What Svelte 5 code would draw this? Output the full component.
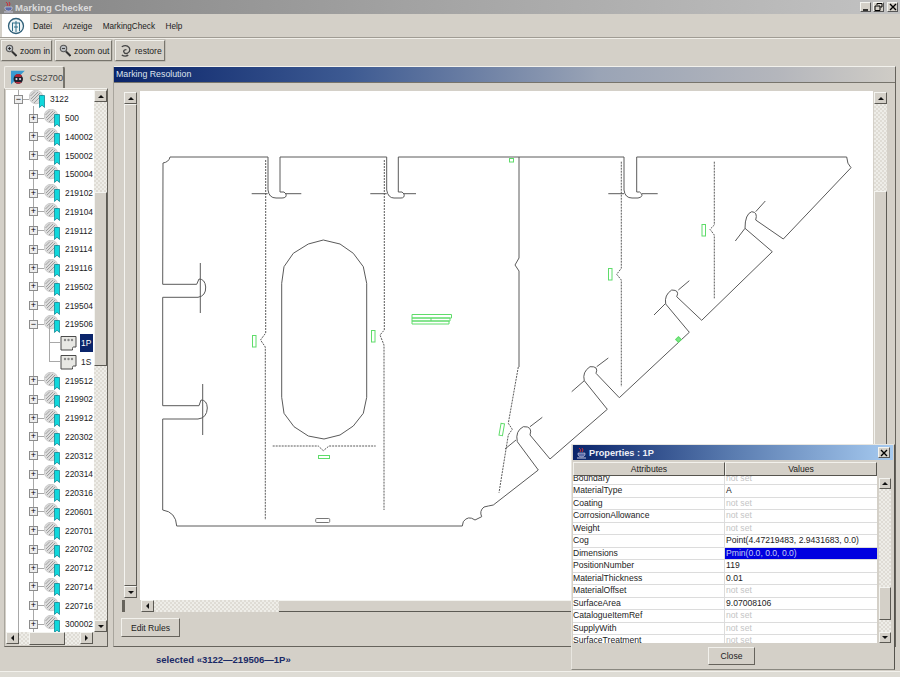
<script>
  const tree = [
    { label: '3122', level: 1, open: true },
    { label: '500', level: 2 },
    { label: '140002', level: 2 },
    { label: '150002', level: 2 },
    { label: '150004', level: 2 },
    { label: '219102', level: 2 },
    { label: '219104', level: 2 },
    { label: '219112', level: 2 },
    { label: '219114', level: 2 },
    { label: '219116', level: 2 },
    { label: '219502', level: 2 },
    { label: '219504', level: 2 },
    { label: '219506', level: 2, open: true },
    { label: '1P', level: 3, selected: true },
    { label: '1S', level: 3 },
    { label: '219512', level: 2 },
    { label: '219902', level: 2 },
    { label: '219912', level: 2 },
    { label: '220302', level: 2 },
    { label: '220312', level: 2 },
    { label: '220314', level: 2 },
    { label: '220316', level: 2 },
    { label: '220601', level: 2 },
    { label: '220701', level: 2 },
    { label: '220702', level: 2 },
    { label: '220712', level: 2 },
    { label: '220714', level: 2 },
    { label: '220716', level: 2 },
    { label: '300002', level: 2 }
  ];

  const props = [
    ['Boundary', null],
    ['MaterialType', 'A'],
    ['Coating', null],
    ['CorrosionAllowance', null],
    ['Weight', null],
    ['Cog', 'Point(4.47219483, 2.9431683, 0.0)'],
    ['Dimensions', 'Pmin(0.0, 0.0, 0.0)', true],
    ['PositionNumber', '119'],
    ['MaterialThickness', '0.01'],
    ['MaterialOffset', null],
    ['SurfaceArea', '9.07008106'],
    ['CatalogueItemRef', null],
    ['SupplyWith', null],
    ['SurfaceTreatment', null]
  ];

  // plate outline, page coordinates (viewBox of the canvas matches the page)
  const outline = `M163 163 Q169 162 170 157 H268 V190 Q269 198 276 198 H282 Q287 198 286 194 Q285 191 280 192 V157
    H386.7 V190 Q388 198 394 198 H401 Q405 198 404 194 Q403 191 398.3 192 V157 H624 V190 Q625 198 632 198 H638
    Q643 197 641.7 194 Q640 191 636.7 192 V157 H846.7 Q847 164 851 167.7 L783.3 239 L755.7 220 Q758 212 751.7 211.7
    Q745 214 745 228.3 L772.3 251.7 L701.7 320.3 L676.7 296.7 Q680 290 671.7 290 Q664 295 665.7 304 L689.3 332.3
    L619.3 397.7 L596 373.3 Q599 366 590 366.7 Q582 372 584.3 380.7 L607.3 409.3 L550 459 L530 435 Q533 426 523.3 426.7
    Q515 431 517.3 441.7 L538.3 470 L493.3 505 Q488 506 484 507 Q479 511 481.7 516.7 L475 520 Q468 515 463.3 521.7
    L462.3 526 H176.7 Q176 512 162.7 510 V419 H198 Q207 418 207.3 408 Q207 400 201 400 L199 405.7 H162.7 V297.3 H198
    Q206 296 205.7 287 Q205 279 199 279 L196.7 284.3 H162.7 Z`;

  const hole = `M281.7 283.3 L284 266.7 293.3 253.3 308.3 244 323.3 240 340 244 353.3 253.3 363.3 266.7 366.7 283.3 V397.3
    L363.3 413.3 353.3 426 340 435 324 439 308.3 436 294 426.7 284 413.3 281.7 397.3 Z`;

  const ticks = `M200.3 263 V313 M202.7 384 V435 M251.7 193.7 H267.7 M285.7 193.7 H301.3 M370.3 193.7 H386.7 M404 193.7 H416
    M608.3 193.7 H624 M641.7 193.7 H657.7 M755.7 211.7 L765.3 201 M745 228.3 L735.3 241 M678.3 290 L689.3 280.7
    M665 304 L654 315 M596.7 366.7 L608.3 358 M584.3 380.7 L571.7 391.7 M530 426.7 L542.3 417.3 M516 440 L505 449
    M519 157 V258 L515 265 519 271 V367`;

  const dashed = `M265.7 160 V333 L260.5 340 265.3 347 V520 M384.3 160 V330 L380 335 384 345 V510
    M621.3 161.7 V268.3 L616.7 274.3 621.3 280 V386.7 M714.3 161.7 V225 L710 229.3 714.3 235 V298.3
    M518.3 367 L508.3 423.3 512.3 429.3 508.3 435 499 492.7 M272.7 446 H318.3 L323.3 450.7 329 446 H375.7`;
</script>

{#snippet groupIcon()}
  <svg class="ticon" width="17" height="18" viewBox="0 0 17 18">
    <circle cx="7" cy="7" r="6.8" fill="#dcdcdc" stroke="#b4b4b4" stroke-width="0.6" />
    <path d="M2 9 L9 2 M3 11 L11 3 M5 13 L13 5 M1.5 6 L6 1.5" stroke="#8e8e8e" stroke-width="0.8" />
    <path d="M10.5 5.5 H15.5 V17.5 L13 15.2 10.5 17.5 Z" fill="#10d8dc" stroke="#067a88" stroke-width="0.7" />
  </svg>
{/snippet}

{#snippet partIcon()}
  <svg class="ticon" width="17" height="16" viewBox="0 0 17 16">
    <path d="M1 1.5 H16 V12 H13.5 Q12.5 12 12.5 13.5 V15 H1 Z" fill="#e8e8e4" stroke="#4a4a4a" />
    <circle cx="5" cy="5" r="1.2" fill="#888" />
    <circle cx="8.5" cy="5" r="1.2" fill="#888" />
    <circle cx="12" cy="5" r="1.2" fill="#888" />
  </svg>
{/snippet}

{#snippet cupIcon()}
  <svg width="11" height="12" viewBox="0 0 11 12">
    <path d="M3 1 Q6 3 4 5 M6 1 Q8 3 6 5" stroke="#c8303a" fill="none" />
    <path d="M2 6 H9 V8 Q8 10 5.5 10 Q3 10 2 8 Z" fill="#5a6aa8" stroke="#e8e8f0" stroke-width="0.5" />
    <path d="M1 11 H10" stroke="#c8c8e0" />
  </svg>
{/snippet}

{#snippet magnifier(sign)}
  <svg width="12" height="13" viewBox="0 0 12 13">
    <circle cx="4.5" cy="4.5" r="3.2" fill="#b8bcc0" stroke="#555" stroke-width="1.1" />
    <path d="M7 7.5 L11.5 12" stroke="#333" stroke-width="2" />
    <path d={sign === '+' ? 'M3 4.5 H6 M4.5 3 V6' : 'M3 4.5 H6'} stroke="#222" stroke-width="0.8" />
  </svg>
{/snippet}

<div class="window">
  <div class="titlebar">
    {@render cupIcon()}
    <span class="title">Marking Checker</span>
    <div class="winbtns">
      <span class="winbtn"><svg width="8" height="8" viewBox="0 0 8 8"><path d="M1 7 H6" stroke="#000" stroke-width="1.5" /></svg></span>
      <span class="winbtn"><svg width="9" height="8" viewBox="0 0 9 8"><path d="M3 2 V0.5 H8 V4 H6.5 M1 3 H6 V7.5 H1 Z" fill="none" stroke="#000" /></svg></span>
      <span class="winbtn close"><svg width="8" height="8" viewBox="0 0 8 8"><path d="M1 1 L7 7 M7 1 L1 7" stroke="#000" stroke-width="1.4" /></svg></span>
    </div>
  </div>

  <div class="menubar">
    <div class="logo">
      <svg width="18" height="18" viewBox="0 0 18 18">
        <circle cx="9" cy="9" r="7.5" fill="#eef4f6" stroke="#2f5f78" stroke-width="1.3" />
        <path d="M5 6 H13 M5.5 6 V14 M9 4 V15 M12.5 6 V14 M7 10 H11" stroke="#2f6f88" fill="none" />
      </svg>
    </div>
    <span class="menu">Datei</span>
    <span class="menu">Anzeige</span>
    <span class="menu">MarkingCheck</span>
    <span class="menu">Help</span>
  </div>

  <div class="toolbar">
    <button class="tool" style="width:51px">{@render magnifier('+')}<span>zoom in</span></button>
    <button class="tool" style="width:57px">{@render magnifier('-')}<span>zoom out</span></button>
    <button class="tool" style="width:50px">
      <svg width="13" height="13" viewBox="0 0 14 14"><path d="M3 3 Q8 0 11 4 Q13 8 9 10 Q6 11 5 8 Q5 6 8 6 M3 12 Q7 14 10 12" fill="none" stroke="#444" stroke-width="1.4" /></svg>
      <span>restore</span>
    </button>
  </div>

  <div class="main">
    <div class="side">
      <div class="tab">
        <svg width="19" height="20" viewBox="0 0 19 20">
          <path d="M0 0 H19 L0 19 Z" fill="#3a9ad0" />
          <circle cx="10" cy="11.5" r="6.5" fill="#20202c" />
          <path d="M5 6.5 Q10 2.5 15 6.5 L14 8.5 H6 Z" fill="#b02030" />
          <circle cx="7.5" cy="11.5" r="1.5" fill="#d8d8e8" /><circle cx="12.5" cy="11.5" r="1.5" fill="#d8d8e8" />
          <path d="M5 15.5 Q10 20 15 15.5" fill="#c03040" />
        </svg>
        <span>CS2700</span>
      </div>
      <div class="treepane">
        <div class="treerow">
          <div class="tree">
            {#each tree as node}
              <div class="node" style="padding-left:{node.level === 3 ? 43 : node.level * 15 - 7}px">
                {#if node.level === 3}
                  <span class="elbow"></span>
                  {@render partIcon()}
                {:else}
                  <span class="toggle">{node.open ? '−' : '+'}</span>
                  <span class="stub"></span>
                  {@render groupIcon()}
                {/if}
                <span class="label" class:selected={node.selected}>{node.label}</span>
              </div>
            {/each}
          </div>
          <div class="vscroll tree-scroll">
            <span class="arrow up"></span>
            <span class="track" style="height:90px"></span>
            <span class="thumb" style="height:174px"></span>
            <span class="track grow"></span>
            <span class="arrow down"></span>
          </div>
        </div>
        <div class="hscroll">
          <span class="arrow left"></span>
          <span class="track" style="width:10px"></span>
          <span class="thumb" style="width:36px"></span>
          <span class="track grow"></span>
          <span class="arrow right"></span>
          <span class="corner"></span>
        </div>
      </div>
    </div>

    <div class="panel">
      <div class="panel-title">Marking Resolution</div>
      <div class="panel-body">
        <div class="canvas-row">
          <div class="vscroll left-scroll">
            <span class="arrow up"></span>
            <span class="thumb grow"></span>
            <span class="arrow down"></span>
          </div>
          <div class="canvas">
            <svg width="733" height="509" viewBox="140 91 733 509">
              <g fill="none" stroke="#5a5a5a" stroke-width="1">
                <path d={outline} />
                <path d={hole} />
                <path d={ticks} />
                <path d={dashed} stroke-dasharray="2 1" />
                <rect x="315.7" y="518.5" width="14" height="4" rx="1" stroke="#777" />
              </g>
              <g fill="none" stroke="#5fdc6a" stroke-width="1">
                <rect x="252.5" y="335.5" width="3.5" height="11.5" />
                <rect x="371.5" y="330.5" width="3.5" height="11.5" />
                <rect x="509.5" y="158.5" width="4" height="3.5" />
                <rect x="608.5" y="268.5" width="3.5" height="11.5" />
                <rect x="702" y="224.5" width="3.5" height="11.5" />
                <rect x="318.5" y="455.5" width="11" height="3" />
                <rect x="500" y="423.5" width="3.5" height="12" transform="rotate(10 501.7 429.5)" />
                <rect x="676.5" y="337.5" width="4" height="4" transform="rotate(45 678.5 339.5)" fill="#7ce884" />
                <path d="M412 314.5 H451.5 V318 H412 Z M412 318 H450 V321 H412 Z M412 321 H449 V324 H412 Z M431 318 V321" />
              </g>
            </svg>
          </div>
          <div class="vscroll right-scroll">
            <span class="arrow up"></span>
            <span class="track" style="height:87px"></span>
            <span class="thumb grow"></span>
            <span class="arrow down"></span>
          </div>
        </div>
        <div class="hscroll canvas-h">
          <span class="splitgrip"></span>
          <span class="arrow left"></span>
          <span class="track" style="width:125px"></span>
          <span class="thumb grow"></span>
        </div>
        <button class="btn edit">Edit Rules</button>
      </div>
    </div>
  </div>

  <div class="status"><span>selected «3122—219506—1P»</span></div>
  <div class="bottomedge"></div>

  <div class="dialog">
    <div class="dlg-title">
      {@render cupIcon()}
      <span>Properties : 1P</span>
      <span class="winbtn dlg-close"><svg width="8" height="8" viewBox="0 0 8 8"><path d="M1 1 L7 7 M7 1 L1 7" stroke="#000" stroke-width="1.4" /></svg></span>
    </div>
    <div class="dlg-body">
      <div class="table">
        <div class="thead"><span>Attributes</span><span>Values</span></div>
        <div class="tbody">
          {#each props as [name, value, active]}
            <div class="prow">
              <span class="pname">{name}</span>
              <span class="pval" class:notset={value === null} class:active={active}>{value ?? 'not set'}</span>
            </div>
          {/each}
        </div>
      </div>
      <div class="vscroll dlg-scroll">
        <span class="arrow up"></span>
        <span class="track" style="height:98px"></span>
        <span class="thumb" style="height:33px"></span>
        <span class="track grow"></span>
        <span class="arrow down"></span>
      </div>
    </div>
    <div class="dlg-foot"><button class="btn close-btn">Close</button></div>
  </div>
</div>

<style>
  :global(body) {
    margin: 0;
    background: #d4d0c8;
  }
  .window {
    position: relative;
    width: 900px;
    height: 677px;
    overflow: hidden;
    display: flex;
    flex-direction: column;
    background: #d4d0c8;
    font-family: "Liberation Sans", Arial, sans-serif;
    font-size: 8.6px;
    color: #1c1c1c;
  }

  /* title bar */
  .titlebar {
    height: 14px;
    flex: none;
    display: flex;
    align-items: center;
    padding-left: 3px;
    gap: 1px;
    background: linear-gradient(90deg, #858585, #a2a2a2 45%, #c2c2c2);
  }
  .title {
    font-weight: bold;
    font-size: 9.6px;
    color: #dcdcdc;
  }
  .winbtns {
    margin-left: auto;
    display: flex;
    gap: 2px;
    padding-right: 2px;
  }
  .winbtn {
    width: 11px;
    height: 10px;
    box-sizing: border-box;
    display: flex;
    align-items: center;
    justify-content: center;
    background: #d4d0c8;
    border: 1px solid;
    border-color: #f4f4f0 #555 #555 #f4f4f0;
  }
  .winbtn.close {
    margin-left: 1px;
  }

  /* menu */
  .menubar {
    height: 23px;
    flex: none;
    display: flex;
    align-items: center;
    border-bottom: 1px solid #a09c94;
    box-shadow: 0 1px 0 #f0eee8;
  }
  .logo {
    width: 28px;
    height: 23px;
    margin-left: 2px;
    margin-right: 3px;
    background: #fff;
    display: flex;
    align-items: center;
    justify-content: center;
  }
  .menu {
    margin-right: 10.5px;
    font-size: 8.2px;
    padding-top: 1px;
  }

  /* toolbar */
  .toolbar {
    height: 24px;
    flex: none;
    display: flex;
    align-items: center;
    gap: 3px;
    padding: 1px 0 0 1px;
    box-sizing: border-box;
  }
  .tool {
    height: 21px;
    padding: 0 0 0 3px;
    display: flex;
    align-items: center;
    gap: 3px;
    white-space: nowrap;
    background: #d4d0c8;
    font: inherit;
    color: inherit;
    border: 1px solid;
    border-color: #f2f1ec #77746c #77746c #f2f1ec;
    box-shadow: 0 0 0 0.5px #a8a59d;
  }

  /* main area */
  .main {
    flex: 1;
    min-height: 0;
    display: flex;
    gap: 5px;
    padding: 4px;
  }
  .side {
    width: 104px;
    display: flex;
    flex-direction: column;
  }
  .tab {
    width: 61px;
    height: 22px;
    flex: none;
    box-sizing: border-box;
    display: flex;
    align-items: center;
    gap: 5px;
    padding-left: 6px;
    border: 1px solid #f0eee8;
    border-right: 2px solid #77746c;
    border-bottom: none;
    border-radius: 2px 3px 0 0;
    font-size: 9.2px;
    color: #444;
  }
  .treepane {
    flex: 1;
    min-height: 0;
    display: flex;
    flex-direction: column;
    box-sizing: border-box;
    border: 1px solid;
    border-color: #f2f1ec #66635c #66635c #a8a59d;
    padding: 1px;
  }
  .treerow {
    flex: 1;
    min-height: 0;
    display: flex;
  }
  .tree {
    width: 88px;
    flex: none;
    overflow: hidden;
    background:
      linear-gradient(#a8a8a8, #a8a8a8) 12px 0 / 1px 100% no-repeat,
      linear-gradient(#a8a8a8, #a8a8a8) 27px 16px / 1px 100% no-repeat,
      #fff;
  }
  .node {
    height: 18.75px;
    display: flex;
    align-items: center;
    white-space: nowrap;
    font-size: 8.4px;
  }
  .toggle {
    width: 9px;
    height: 9px;
    flex: none;
    box-sizing: border-box;
    border: 1px solid #8c8c8c;
    background: #eee;
    font-size: 9px;
    line-height: 7px;
    text-align: center;
    color: #000;
  }
  .stub {
    width: 6px;
    height: 1px;
    flex: none;
    background: #a8a8a8;
  }
  .elbow {
    width: 11px;
    height: 18.75px;
    margin-top: -18.75px;
    flex: none;
    box-sizing: border-box;
    border-left: 1px solid #a8a8a8;
    border-bottom: 1px solid #a8a8a8;
  }
  .ticon {
    flex: none;
  }
  .label {
    margin-left: 3px;
    padding: 0 1px;
  }
  .label.selected {
    margin-left: 3px;
    width: 11px;
    height: 18px;
    line-height: 18px;
    background: #0a246a;
    color: #fff;
  }

  /* scrollbars */
  .vscroll {
    width: 13px;
    flex: none;
    display: flex;
    flex-direction: column;
  }
  .hscroll {
    height: 13px;
    flex: none;
    display: flex;
  }
  .arrow {
    width: 13px;
    height: 12px;
    flex: none;
    box-sizing: border-box;
    display: flex;
    align-items: center;
    justify-content: center;
    background: #d4d0c8;
    border: 1px solid;
    border-color: #f4f4f0 #5c5a54 #5c5a54 #f4f4f0;
  }
  .arrow::after {
    content: "";
    width: 0;
    height: 0;
    border: 3.5px solid transparent;
  }
  .arrow.up::after {
    border-bottom-color: #111;
    border-top-width: 0;
  }
  .arrow.down::after {
    border-top-color: #111;
    border-bottom-width: 0;
  }
  .arrow.left::after {
    border-right-color: #111;
    border-left-width: 0;
  }
  .arrow.right::after {
    border-left-color: #111;
    border-right-width: 0;
  }
  .track {
    flex: none;
    display: block;
    background: repeating-conic-gradient(#dfdcd5 0 25%, #eeede8 0 50%) 0 0 / 4px 4px;
  }
  .track.grow,
  .thumb.grow {
    flex: 1;
    min-width: 0;
    min-height: 0;
  }
  .thumb {
    flex: none;
    display: block;
    box-sizing: border-box;
    background: #d4d0c8;
    border: 1px solid;
    border-color: #f4f4f0 #5c5a54 #5c5a54 #f4f4f0;
  }
  .hscroll .corner {
    width: 13px;
    flex: none;
  }

  /* marking panel */
  .panel {
    flex: 1;
    min-width: 0;
    display: flex;
    flex-direction: column;
    box-sizing: border-box;
    border: 1px solid;
    border-color: #f2f1ec #66635c #66635c #a8a59d;
  }
  .panel-title {
    height: 15px;
    flex: none;
    padding-left: 2px;
    line-height: 15px;
    font-size: 8.8px;
    color: #dfe4ee;
    background: linear-gradient(90deg, #0a246a, #3d5a92 30%, #9aa4b6 62%, #b4b6bc 85%, #cfccc6);
    border-bottom: 1px solid #77746c;
  }
  .panel-body {
    flex: 1;
    min-height: 0;
    display: flex;
    flex-direction: column;
    padding: 9px 0 0 10px;
  }
  .canvas-row {
    height: 509px;
    flex: none;
    display: flex;
  }
  .left-scroll {
    height: 506px;
    margin-right: 3px;
  }
  .canvas {
    width: 733px;
    height: 509px;
    margin-top: -1px;
    flex: none;
    background: #fff;
  }
  .canvas svg {
    display: block;
  }
  .right-scroll {
    height: 506px;
    margin-left: 1px;
  }
  .canvas-h {
    height: 12px;
    margin-top: -1px;
  }
  .splitgrip {
    width: 3px;
    height: 12px;
    margin: 0 16px 0 -2px;
    flex: none;
    background: #66635c;
  }
  .canvas-h .thumb {
    border-left: none;
  }
  .btn {
    padding: 0;
    font: inherit;
    color: #222;
    background: #d4d0c8;
    border: 1px solid;
    border-color: #f2f1ec #66635c #66635c #f2f1ec;
  }
  .edit {
    width: 59px;
    height: 19px;
    margin: 6px 0 0 -3px;
  }

  /* status */
  .status {
    height: 21px;
    flex: none;
    box-sizing: border-box;
    padding: 0 0 3px 156px;
    display: flex;
    align-items: center;
    border-bottom: 1px solid #f2f1ec;
    font-weight: bold;
    font-size: 9.5px;
    color: #1a2a66;
  }
  .bottomedge {
    height: 5px;
    flex: none;
    background: #dedcd5;
  }

  /* floating properties window */
  .dialog {
    position: absolute;
    left: 571px;
    top: 444px;
    width: 324px;
    height: 226px;
    box-sizing: border-box;
    display: flex;
    flex-direction: column;
    background: #d4d0c8;
    border: 1px solid;
    border-color: #e8e6e0 #55534d #8a8880 #e8e6e0;
    padding: 0 1px;
  }
  .dlg-title {
    height: 15px;
    flex: none;
    display: flex;
    align-items: center;
    gap: 2px;
    padding-left: 3px;
    font-weight: bold;
    font-size: 9.2px;
    color: #eef0f6;
    background: linear-gradient(90deg, #0a246a, #5a7cb0 50%, #a6caf0);
  }
  .dlg-close {
    margin-left: auto;
    margin-right: 3px;
    width: 12px;
    height: 11px;
  }
  .dlg-body {
    height: 181px;
    flex: none;
    margin-top: 2px;
    display: flex;
    gap: 1px;
  }
  .table {
    width: 304px;
    flex: none;
    display: flex;
    flex-direction: column;
  }
  .thead {
    height: 14px;
    flex: none;
    display: grid;
    grid-template-columns: 152px 152px;
  }
  .thead span {
    box-sizing: border-box;
    text-align: center;
    line-height: 12px;
    border: 1px solid;
    border-color: #f2f1ec #55534d #55534d #f2f1ec;
  }
  .tbody {
    flex: 1;
    min-height: 0;
    overflow: hidden;
    background: #fff;
  }
  .prow {
    height: 12.47px;
    display: grid;
    grid-template-columns: 152px 152px;
    box-sizing: border-box;
    border-bottom: 1px solid #dcdcdc;
    line-height: 11.5px;
    white-space: nowrap;
  }
  .prow:first-child {
    margin-top: -3px;
  }
  .pname {
    border-right: 1px solid #dcdcdc;
    overflow: hidden;
  }
  .pval {
    padding-left: 1px;
    overflow: hidden;
  }
  .notset {
    color: #c4c4c4;
  }
  .active {
    background: #0000e0;
    color: #c6cdf0;
  }
  .dlg-scroll {
    width: 12px;
    padding-top: 16px;
    margin-left: 1px;
    box-sizing: border-box;
  }
  .dlg-scroll .arrow {
    width: 12px;
    height: 11px;
  }
  .dlg-foot {
    flex: 1;
    display: flex;
    justify-content: center;
    padding: 4px 3px 0 0;
    box-sizing: border-box;
  }
  .close-btn {
    width: 47px;
    height: 18px;
  }
</style>
